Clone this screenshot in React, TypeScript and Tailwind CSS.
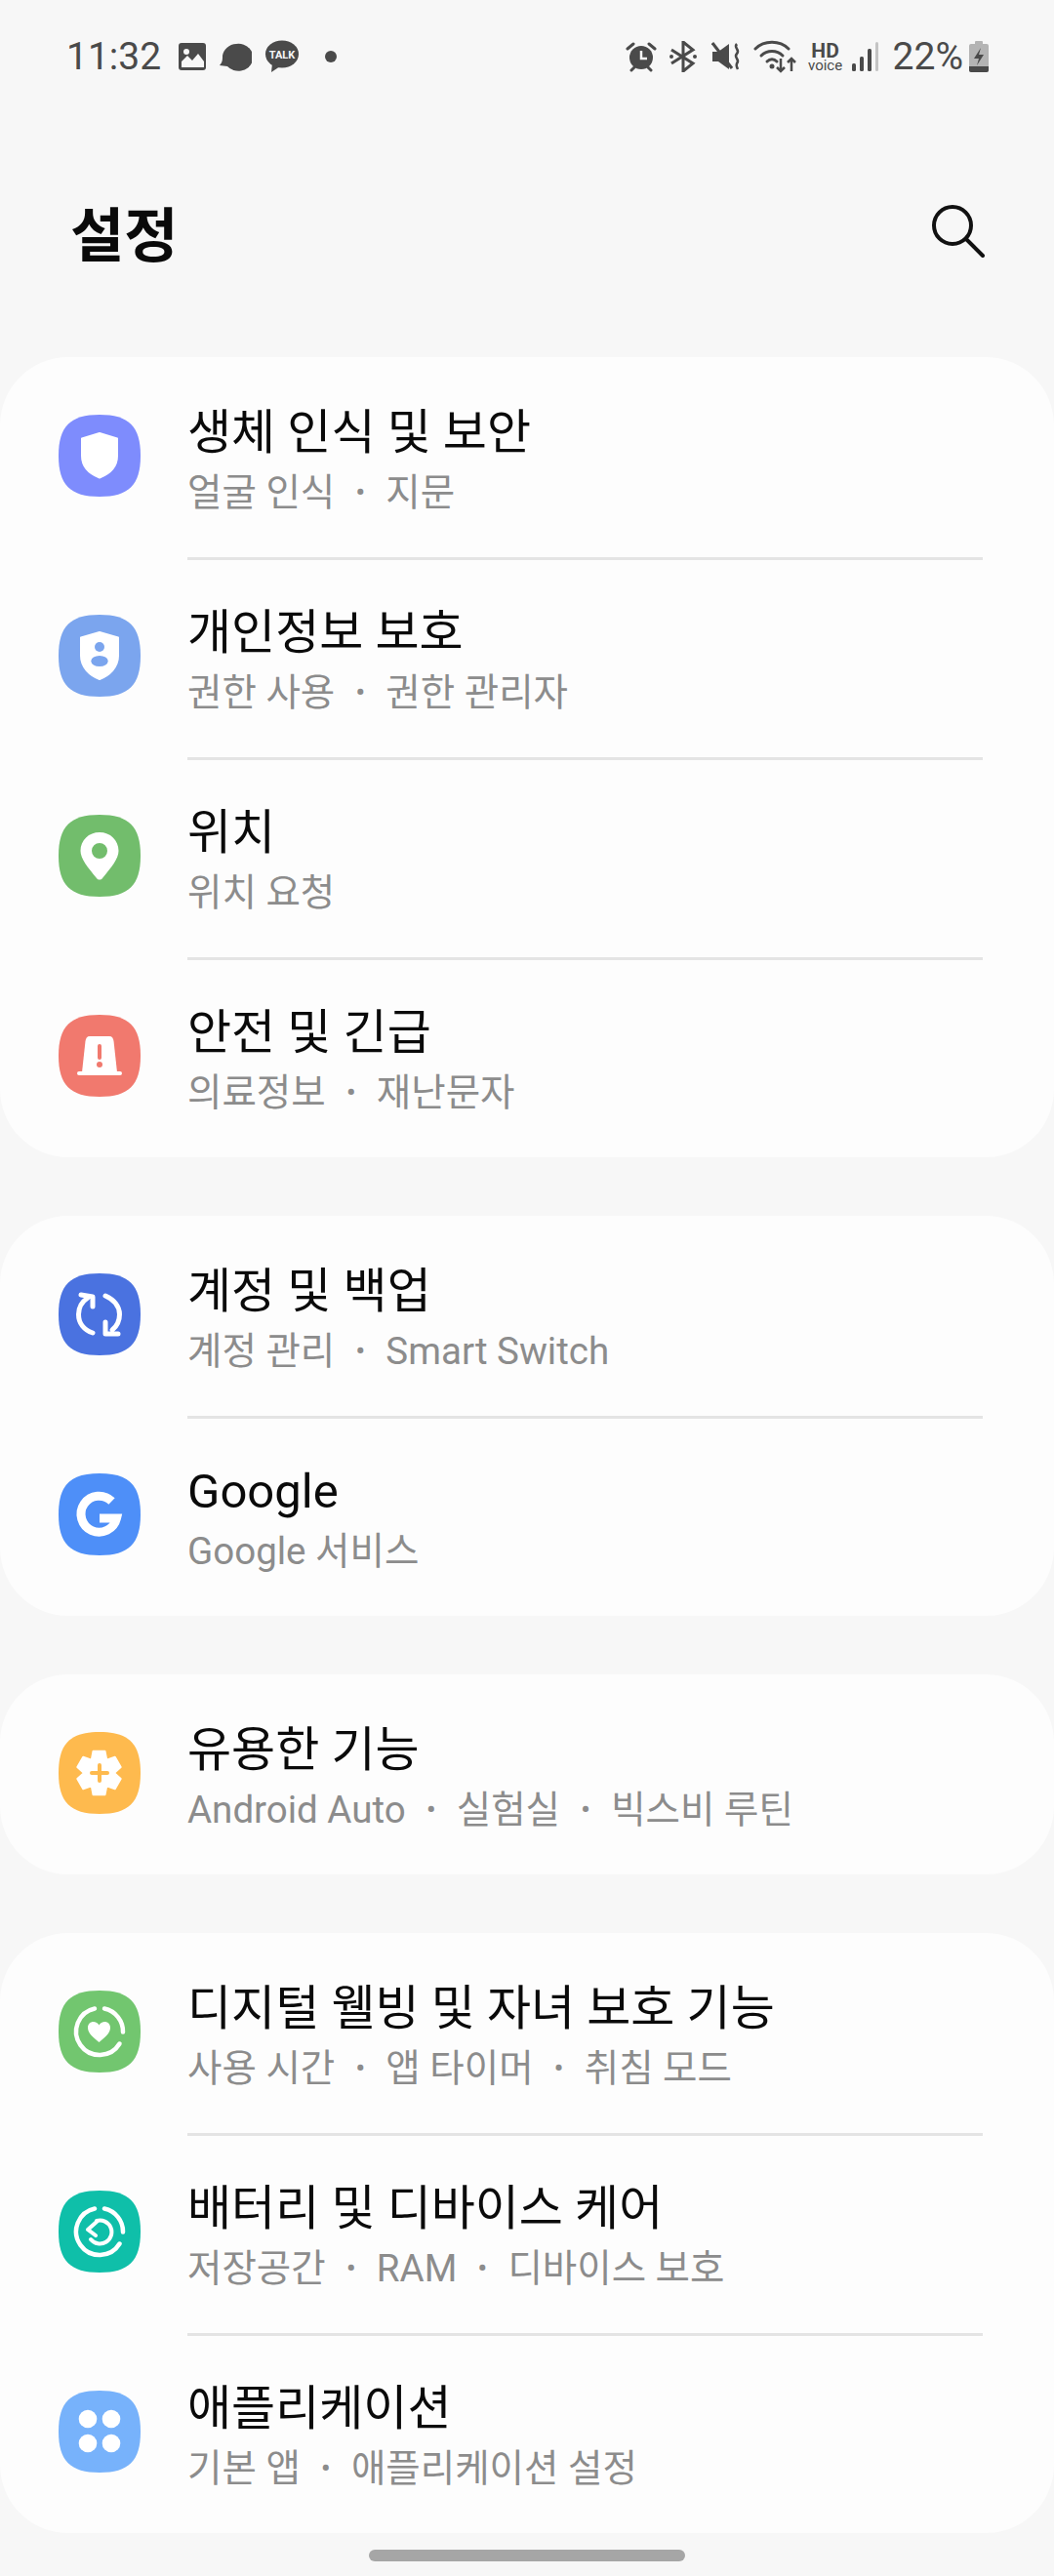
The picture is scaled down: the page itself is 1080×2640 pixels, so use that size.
import type { ReactNode } from 'react';

const FONT = "font-['Roboto','Noto_Sans_CJK_KR',sans-serif]";

// squircle used behind every settings icon
const SQUIRCLE = 'M42 0C72 0 84 12 84 42C84 72 72 84 42 84C12 84 0 72 0 42C0 12 12 0 42 0Z';

// six lobed gear for the advanced features icon
const GEAR_POINTS = [-90, -30, 30, 90, 150, 210]
  .flatMap((a) =>
    [
      [a - 30, 15.5],
      [a - 15, 23],
      [a + 15, 23],
    ].map(([deg, r]) => {
      const rad = (deg * Math.PI) / 180;
      return `${(41.5 + r * Math.cos(rad)).toFixed(1)},${(42 + r * Math.sin(rad)).toFixed(1)}`;
    }),
  )
  .join(' ');

function AppIcon({ color, children }: { color: string; children: ReactNode }) {
  return (
    <svg width="84" height="84" viewBox="0 0 84 84" className="mb-[3px] shrink-0">
      <path d={SQUIRCLE} fill={color} />
      {children}
    </svg>
  );
}

const icons = {
  biometric: (
    <AppIcon color="#7e8cfd">
      <path d="M42 19L60 24.5V42C60 54 51 61 42 64.5C33 61 24 54 24 42V24.5Z" fill="#fff" stroke="#fff" strokeWidth="2" strokeLinejoin="round" />
    </AppIcon>
  ),
  privacy: (
    <AppIcon color="#7ba5ee">
      <path d="M42 18L61 23.5V42C61 54 52 62 42 66C32 62 23 54 23 42V23.5Z" fill="#fff" stroke="#fff" strokeWidth="2" strokeLinejoin="round" />
      <circle cx="42" cy="33" r="5" fill="#7ba5ee" />
      <ellipse cx="42" cy="47.5" rx="8.7" ry="5.5" fill="#7ba5ee" />
    </AppIcon>
  ),
  location: (
    <AppIcon color="#72bd6c">
      <path fillRule="evenodd" d="M42 18C53 18 61.5 26 61.5 37C61.5 45 54 54 45 65C43.5 67 40.5 67 39 65C30 54 22.5 45 22.5 37C22.5 26 31 18 42 18ZM42 29A8 8 0 1 0 42 45A8 8 0 1 0 42 29Z" fill="#fff" />
    </AppIcon>
  ),
  safety: (
    <AppIcon color="#f1796e">
      <path d="M32 22H52C55 22 56 24 56.5 27L60 59H24L27.5 27C28 24 29 22 32 22Z" fill="#fff" />
      <rect x="19" y="58" width="46" height="4" rx="2" fill="#fff" />
      <rect x="40" y="30" width="4" height="16" rx="2" fill="#f1796e" />
      <circle cx="42" cy="51" r="3" fill="#f1796e" />
    </AppIcon>
  ),
  accounts: (
    <AppIcon color="#4a72e0">
      <g fill="none" stroke="#fff" strokeWidth="5" strokeLinecap="round" strokeLinejoin="round">
        <path d="M35 61C26 58 20.5 51 20.5 42C20.5 35 24 29 30 25" />
        <path d="M23 22L35 24V34" />
        <path d="M48 23C57 27 62.5 34 62.5 42C62.5 49 60 54 55 58" />
        <path d="M61 62H48V50" />
      </g>
    </AppIcon>
  ),
  google: (
    <AppIcon color="#4e8ff8">
      <path d="M54.5 28.5A18.5 18.5 0 1 0 59.5 46H42" fill="none" stroke="#fff" strokeWidth="9" />
    </AppIcon>
  ),
  advanced: (
    <AppIcon color="#feba4e">
      <polygon points={GEAR_POINTS} fill="#fff" stroke="#fff" strokeWidth="2" strokeLinejoin="round" />
      <rect x="32" y="40" width="20" height="4" rx="2" fill="#feba4e" />
      <rect x="40" y="32" width="4" height="20" rx="2" fill="#feba4e" />
    </AppIcon>
  ),
  wellbeing: (
    <AppIcon color="#72c66f">
      <g fill="none" stroke="#fff" strokeWidth="4.5" strokeLinecap="round">
        <path d="M37 18.5A24 24 0 1 0 62.5 54.5" />
        <path d="M47 18.5A24 24 0 0 1 66 42.5" />
      </g>
      <path d="M41.5 53C36 48.5 30 44 30 38C30 34 33 32 35.5 32C38 32 40.5 33.5 41.5 35.5C42.5 33.5 45 32 47.5 32C50 32 53 34 53 38C53 44 47 48.5 41.5 53Z" fill="#fff" />
    </AppIcon>
  ),
  battery: (
    <AppIcon color="#0fbfa9">
      <g fill="none" stroke="#fff" strokeLinecap="round" strokeLinejoin="round">
        <path d="M37 18.5A24 24 0 1 0 62.5 54.5" strokeWidth="4.5" />
        <path d="M47 18.5A24 24 0 0 1 66 42.5" strokeWidth="4.5" />
        <path d="M39 31A12 12 0 1 1 33 50" strokeWidth="4" />
        <path d="M39 32L30 40L38 46" strokeWidth="4" />
      </g>
    </AppIcon>
  ),
  apps: (
    <AppIcon color="#77b2fb">
      <circle cx="30" cy="29" r="9.3" fill="#fff" />
      <circle cx="54" cy="29" r="9.3" fill="#fff" />
      <circle cx="30" cy="54" r="9.3" fill="#fff" />
      <circle cx="54" cy="54" r="9.3" fill="#fff" />
    </AppIcon>
  ),
};

const groups = [
  [
    { icon: icons.biometric, title: '생체 인식 및 보안', sub: ['얼굴 인식', '지문'] },
    { icon: icons.privacy, title: '개인정보 보호', sub: ['권한 사용', '권한 관리자'] },
    { icon: icons.location, title: '위치', sub: ['위치 요청'] },
    { icon: icons.safety, title: '안전 및 긴급', sub: ['의료정보', '재난문자'] },
  ],
  [
    { icon: icons.accounts, title: '계정 및 백업', sub: ['계정 관리', 'Smart Switch'] },
    { icon: icons.google, title: 'Google', sub: ['Google 서비스'] },
  ],
  [{ icon: icons.advanced, title: '유용한 기능', sub: ['Android Auto', '실험실', '빅스비 루틴'] }],
  [
    { icon: icons.wellbeing, title: '디지털 웰빙 및 자녀 보호 기능', sub: ['사용 시간', '앱 타이머', '취침 모드'] },
    { icon: icons.battery, title: '배터리 및 디바이스 케어', sub: ['저장공간', 'RAM', '디바이스 보호'] },
    { icon: icons.apps, title: '애플리케이션', sub: ['기본 앱', '애플리케이션 설정'] },
  ],
];

function StatusBar() {
  return (
    <div className="flex h-[114px] items-center justify-between pl-[68px] pr-[67px] pt-[2px] text-[#4a4a4a]">
      <div className="flex items-center">
        <span className="text-[39px] leading-none">11:32</span>
        {/* gallery */}
        <svg width="30" height="30" viewBox="0 0 30 30" className="ml-[17px]">
          <rect x="1" y="1" width="28" height="28" rx="3" fill="#4a4a4a" />
          <circle cx="9" cy="10" r="3" fill="#f7f7f7" />
          <path d="M4 26V20L10 14L15 19L21 12L27 20V26Z" fill="#f7f7f7" />
        </svg>
        {/* messages */}
        <svg width="34" height="30" viewBox="0 0 34 30" className="ml-[12px]">
          <path d="M18 2A15 14 0 1 1 9 25L1 24C4 21 4 18 4 14C5 8 11 2 18 2Z" fill="#4a4a4a" />
        </svg>
        {/* kakaotalk */}
        <svg width="36" height="34" viewBox="0 0 36 34" className="ml-[13px]">
          <ellipse cx="18" cy="14.5" rx="17" ry="14" fill="#4a4a4a" />
          <path d="M8 24L7 33L16 27Z" fill="#4a4a4a" />
          <text x="18" y="19" textAnchor="middle" fontSize="11" fontWeight="700" fill="#f7f7f7" fontFamily="Roboto, sans-serif">TALK</text>
        </svg>
        <span className="ml-[26px] h-[12px] w-[12px] rounded-full bg-[#4a4a4a]" />
      </div>
      <div className="flex items-center">
        {/* alarm */}
        <svg width="32" height="32" viewBox="0 0 32 32">
          <circle cx="16" cy="17" r="12" fill="#4a4a4a" />
          <path d="M16 10V18H22" fill="none" stroke="#f7f7f7" strokeWidth="2.5" />
          <path d="M2 8L8 3M30 8L24 3M6 30L9 27M26 30L23 27" stroke="#4a4a4a" strokeWidth="3" strokeLinecap="round" />
        </svg>
        {/* bluetooth */}
        <svg width="30" height="32" viewBox="0 0 30 32" className="ml-[12px]">
          <path d="M3 9L25 23L15 31V1L25 9L3 23" fill="none" stroke="#4a4a4a" strokeWidth="3" />
          <circle cx="3" cy="16" r="2" fill="#4a4a4a" />
          <circle cx="27" cy="16" r="2" fill="#4a4a4a" />
        </svg>
        {/* muted */}
        <svg width="32" height="32" viewBox="0 0 32 32" className="ml-[14px]">
          <path d="M1 11H7L18 3V29L7 21H1Z" fill="#4a4a4a" />
          <path d="M1 2L21 28" stroke="#4a4a4a" strokeWidth="3" />
          <path d="M26 3C22 7 30 9 26 13C22 17 30 19 26 23C25 25 26 27 27 29" fill="none" stroke="#4a4a4a" strokeWidth="2.5" />
        </svg>
        {/* wifi */}
        <svg width="46" height="34" viewBox="0 0 46 34" className="ml-[11px]">
          <g fill="none" stroke="#4a4a4a" strokeWidth="3" strokeLinecap="round">
            <path d="M2 9C11 0 27 0 36 9" />
            <path d="M8 16C14 10 24 10 30 16" />
            <path d="M14 22C17 19 21 19 24 22" />
          </g>
          <circle cx="19" cy="27" r="2.5" fill="#4a4a4a" />
          <path d="M28 19V32M24 28L28 32L32 28M39 32V19M35 23L39 19L43 23" fill="none" stroke="#4a4a4a" strokeWidth="2.5" />
        </svg>
        <div className="ml-[12px] flex w-[32px] flex-col items-center">
          <span className="text-[21px] font-bold leading-[18px]">HD</span>
          <span className="text-[15px] leading-[12px]">voice</span>
        </div>
        {/* signal */}
        <svg width="28" height="30" viewBox="0 0 28 30" className="ml-[10px]">
          <rect x="1" y="22" width="4" height="8" rx="1.5" fill="#4a4a4a" />
          <rect x="9" y="15" width="4" height="15" rx="1.5" fill="#4a4a4a" />
          <rect x="17" y="7" width="4" height="23" rx="1.5" fill="#4a4a4a" />
          <rect x="25" y="0" width="3" height="30" rx="1.5" fill="#c4c4c4" />
        </svg>
        <span className="ml-[15px] text-[39px] leading-none">22%</span>
        {/* battery charging */}
        <svg width="20" height="32" viewBox="0 0 20 32" className="ml-[6px]">
          <rect x="6" y="0" width="8" height="4" rx="1" fill="#b4b4b4" />
          <rect x="0" y="3" width="20" height="29" rx="2" fill="#b4b4b4" />
          <path d="M0 26H20V30C20 31 19 32 18 32H2C1 32 0 31 0 30Z" fill="#4a4a4a" />
          <path d="M12 7L5 18H10L8 25L15 14H10Z" fill="#4a4a4a" />
        </svg>
      </div>
    </div>
  );
}

export default function App() {
  return (
    <div className={`${FONT} flex h-[2640px] w-[1080px] flex-col overflow-hidden bg-[#f7f7f7]`}>
      <StatusBar />

      {/* Header */}
      <div className="flex h-[252px] items-start justify-between pl-[72px] pr-[71px] pt-[96px]">
        <h1 className="text-[60px] font-bold leading-[66px] text-[#0a0a0a]">설정</h1>
        <svg width="56" height="56" viewBox="0 0 56 56" className="-mt-[2px]">
          <circle cx="23" cy="23" r="19" fill="none" stroke="#111" strokeWidth="4" />
          <path d="M37 37L54 54" stroke="#111" strokeWidth="4" strokeLinecap="round" />
        </svg>
      </div>

      {/* Groups */}
      <div className="flex flex-col gap-[60px]">
        {groups.map((rows) => (
          <div key={rows[0].title} className="rounded-[70px] bg-[#fdfdfd]">
            {rows.map((row, j) => (
              <div key={row.title} className="flex h-[205px] items-center pl-[60px]">
                {row.icon}
                <div className={`ml-[48px] mr-[73px] flex h-full flex-1 flex-col justify-center ${j > 0 ? 'border-t-[3px] border-[#e4e4e4] pt-[1px]' : 'pt-[5px]'}`}>
                  <p className="text-[49px] leading-[60px] text-[#0a0a0a]">{row.title}</p>
                  <p className="mt-[8px] flex items-center text-[38.5px] leading-[46px] text-[#8c8c8c]">
                    {row.sub.map((s, k) => (
                      <span key={s} className="flex items-center">
                        {k > 0 && <span className="mx-[21px] text-[30px]">•</span>}
                        {s}
                      </span>
                    ))}
                  </p>
                </div>
              </div>
            ))}
          </div>
        ))}
      </div>

      {/* Gesture bar */}
      <div className="mt-[17px] flex justify-center">
        <div className="h-[12px] w-[324px] rounded-full bg-[#a6a6a6]" />
      </div>
    </div>
  );
}
